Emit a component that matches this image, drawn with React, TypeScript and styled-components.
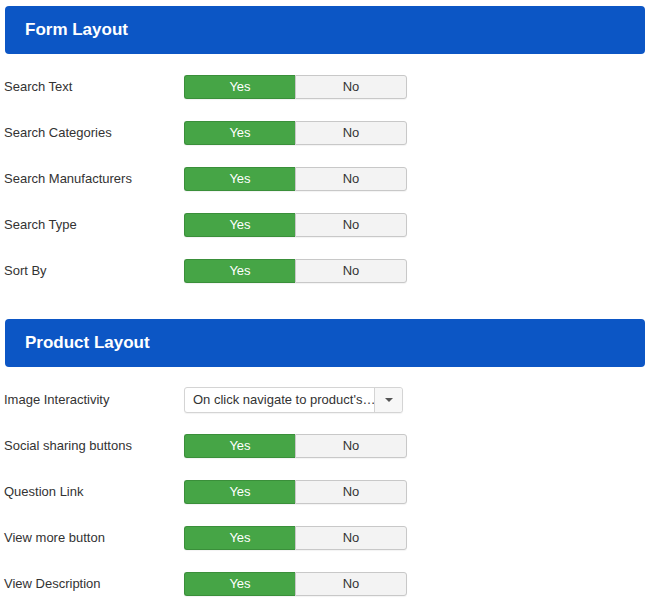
import React from 'react';
import styled, { createGlobalStyle } from 'styled-components';

const GlobalStyle = createGlobalStyle`
  body {
    margin: 0;
    background: #fff;
    font-family: "Liberation Sans", Arial, sans-serif;
    color: #333;
  }
`;

const formFields = ['Search Text', 'Search Categories', 'Search Manufacturers', 'Search Type', 'Sort By'];
const productFields = ['Social sharing buttons', 'Question Link', 'View more button', 'View Description'];

export default function App() {
  return (
    <>
      <GlobalStyle />
      <Page>
        <SectionHeader>Form Layout</SectionHeader>
        <Rows>
          {formFields.map((f) => (
            <Row key={f}>
              <Label>{f}</Label>
              <Toggle />
            </Row>
          ))}
        </Rows>
        <SectionHeader $spaced>Product Layout</SectionHeader>
        <Rows>
          <Row>
            <Label>Image Interactivity</Label>
            <Select>
              <SelectText>On click navigate to product's…</SelectText>
              <Caret>
                <svg width="8" height="4" viewBox="0 0 8 4">
                  <path d="M0 0h8L4 4z" fill="#555" />
                </svg>
              </Caret>
            </Select>
          </Row>
          {productFields.map((f) => (
            <Row key={f}>
              <Label>{f}</Label>
              <Toggle />
            </Row>
          ))}
        </Rows>
      </Page>
    </>
  );
}

const Toggle = () => (
  <ToggleGroup>
    <ToggleBtn $active>Yes</ToggleBtn>
    <ToggleBtn>No</ToggleBtn>
  </ToggleGroup>
);

const Page = styled.div`
  padding: 6px 8px 0 4px;
`;

const SectionHeader = styled.div<{ $spaced?: boolean }>`
  margin: ${(p) => (p.$spaced ? '25px' : '0')} 0 0 1px;
  height: 48px;
  border-radius: 4px;
  background: #0c56c5;
  color: #fff;
  font-size: 17px;
  font-weight: bold;
  display: flex;
  align-items: center;
  padding-left: 20px;
`;

const Rows = styled.div`
  padding-top: 10px;
  display: flex;
  flex-direction: column;
`;

const Row = styled.div`
  height: 46px;
  display: flex;
  align-items: center;
`;

const Label = styled.div`
  width: 180px;
  font-size: 13px;
  color: #333;
  padding-bottom: 2px;
`;

const ToggleGroup = styled.div`
  display: flex;
  width: 223px;
  height: 24px;
`;

const ToggleBtn = styled.div<{ $active?: boolean }>`
  flex: 1;
  display: flex;
  align-items: center;
  justify-content: center;
  padding-bottom: 2px;
  font-size: 13px;
  color: ${(p) => (p.$active ? '#fff' : '#333')};
  background: ${(p) => (p.$active ? '#46a546' : '#f3f3f3')};
  border: 1px solid ${(p) => (p.$active ? '#3a8f3a' : '#c8c8c8')};
  ${(p) => (p.$active ? 'border-right: none;' : '')}
  border-radius: ${(p) => (p.$active ? '3px 0 0 3px' : '0 3px 3px 0')};
  box-shadow: 0 1px 1px rgba(0, 0, 0, 0.05);
`;

const Select = styled.div`
  width: 219px;
  height: 26px;
  box-sizing: border-box;
  border: 1px solid #d4d4d4;
  border-radius: 3px;
  display: flex;
  background: #fff;
  box-shadow: 0 1px 1px rgba(0, 0, 0, 0.05);
`;

const SelectText = styled.div`
  flex: 1;
  font-size: 13px;
  color: #333;
  display: flex;
  align-items: center;
  padding: 0 0 2px 8px;
  white-space: nowrap;
  overflow: hidden;
`;

const Caret = styled.div`
  width: 27px;
  border-left: 1px solid #d4d4d4;
  background: #f7f7f7;
  display: flex;
  align-items: center;
  justify-content: center;
  border-radius: 0 3px 3px 0;
`;
